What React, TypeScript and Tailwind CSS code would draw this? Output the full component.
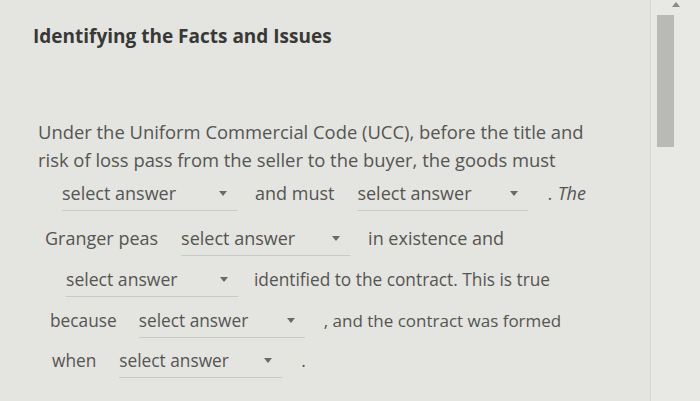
function Select({ w }: { w: number }) {
  return (
    <span
      className="inline-flex items-baseline justify-between border-b border-[#c9c9c5] pb-[3px] pr-[10px]"
      style={{ width: w }}
    >
      <span>select answer</span>
      <svg width="8" height="5" viewBox="0 0 8 5" className="self-center">
        <path d="M0 0h8L4 5z" fill="#6a6a6a" />
      </svg>
    </span>
  );
}

export default function App() {
  return (
    <div className="relative h-[401px] w-[700px] overflow-hidden bg-[#e4e4e0] font-['Open_Sans',sans-serif] text-[18px] leading-[27px] text-[#555552]">
      <div className="pr-[60px]">
        <h1 className="pl-[33px] pt-[23px] text-[19px] font-bold leading-[26px] text-[#383836]">
          Identifying the Facts and Issues
        </h1>

        <p className="pl-[38px] pt-[69px] text-[18.4px] leading-[28px]">
          Under the Uniform Commercial Code (UCC), before the title and
          <br />
          risk of loss pass from the seller to the buyer, the goods must
        </p>

        <div className="flex h-[40px] items-baseline pl-[62px] pt-[6px]">
          <Select w={175} />
          <span className="ml-[18px]">and must</span>
          <span className="ml-[23px]">
            <Select w={171} />
          </span>
          <span className="ml-[20px] italic">. The</span>
        </div>

        <div className="mt-[5px] flex h-[40px] items-baseline pl-[45px] pt-[6px]">
          <span>Granger peas</span>
          <span className="ml-[23px]">
            <Select w={169} />
          </span>
          <span className="ml-[18px]">in existence and</span>
        </div>

        <div className="mt-[1px] flex h-[40px] items-baseline pl-[66px] pt-[6px] text-[17.6px]">
          <Select w={172} />
          <span className="ml-[16px] text-[17.3px]">identified to the contract. This is true</span>
        </div>

        <div className="mt-[1px] flex h-[40px] items-baseline pl-[50px] pt-[6px] text-[17.3px]">
          <span>because</span>
          <span className="ml-[22px]">
            <Select w={166} />
          </span>
          <span className="ml-[19px] text-[17px]">, and the contract was formed</span>
        </div>

        <div className="flex h-[38px] items-baseline pl-[52px] pt-[6px] text-[17.3px]">
          <span>when</span>
          <span className="ml-[23px]">
            <Select w={163} />
          </span>
          <span className="ml-[19px]">.</span>
        </div>
      </div>

      {/* scrollbar */}
      <div className="absolute right-0 top-0 h-full w-[50px] border-l border-[#d8d8d4] bg-[#e8e8e4]">
        <div className="mx-auto mt-[2px] h-0 w-0 border-x-[4px] border-b-[5px] border-x-transparent border-b-[#8a8a88]" />
        <div className="ml-[6px] mt-[8px] h-[132px] w-[17px] bg-[#b9b9b5]" />
      </div>
    </div>
  );
}
